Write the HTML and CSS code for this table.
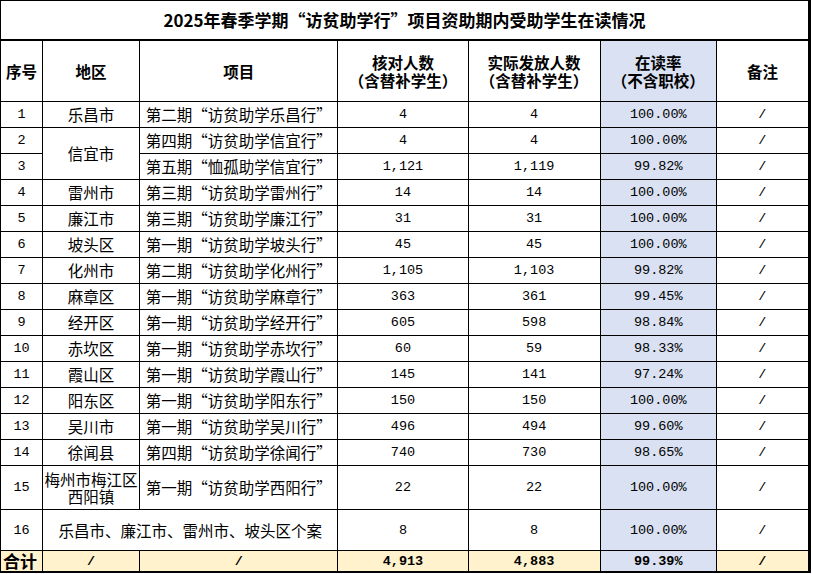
FILE: index.html
```html
<!DOCTYPE html>
<html lang="zh-CN">
<head>
<meta charset="utf-8">
<title>2025年春季学期“访贫助学行”项目资助期内受助学生在读情况</title>
<link rel="stylesheet" href="styles.css">
</head>
<body>
<table class="sheet">
  <colgroup>
    <col class="c-no"><col class="c-area"><col class="c-proj"><col class="c-num"><col class="c-num2"><col class="c-rate"><col class="c-note">
  </colgroup>
  <tr class="r-title"><td colspan="7" class="title">2025年春季学期“访贫助学行”项目资助期内受助学生在读情况</td></tr>
  <tr class="r-head">
    <th>序号</th><th>地区</th><th>项目</th>
    <th>核对人数<br>（含替补学生）</th>
    <th>实际发放人数<br>（含替补学生）</th>
    <th class="rate">在读率<br>（不含职校）</th>
    <th>备注</th>
  </tr>
  <tr class="r"><td class="n">1</td><td>乐昌市</td><td>第二期“访贫助学乐昌行”</td><td class="n">4</td><td class="n">4</td><td class="n rate">100.00%</td><td class="n">/</td></tr>
  <tr class="r"><td class="n">2</td><td rowspan="2">信宜市</td><td>第四期“访贫助学信宜行”</td><td class="n">4</td><td class="n">4</td><td class="n rate">100.00%</td><td class="n">/</td></tr>
  <tr class="r"><td class="n">3</td><td>第五期“恤孤助学信宜行”</td><td class="n">1,121</td><td class="n">1,119</td><td class="n rate">99.82%</td><td class="n">/</td></tr>
  <tr class="r"><td class="n">4</td><td>雷州市</td><td>第三期“访贫助学雷州行”</td><td class="n">14</td><td class="n">14</td><td class="n rate">100.00%</td><td class="n">/</td></tr>
  <tr class="r"><td class="n">5</td><td>廉江市</td><td>第三期“访贫助学廉江行”</td><td class="n">31</td><td class="n">31</td><td class="n rate">100.00%</td><td class="n">/</td></tr>
  <tr class="r"><td class="n">6</td><td>坡头区</td><td>第一期“访贫助学坡头行”</td><td class="n">45</td><td class="n">45</td><td class="n rate">100.00%</td><td class="n">/</td></tr>
  <tr class="r"><td class="n">7</td><td>化州市</td><td>第二期“访贫助学化州行”</td><td class="n">1,105</td><td class="n">1,103</td><td class="n rate">99.82%</td><td class="n">/</td></tr>
  <tr class="r"><td class="n">8</td><td>麻章区</td><td>第一期“访贫助学麻章行”</td><td class="n">363</td><td class="n">361</td><td class="n rate">99.45%</td><td class="n">/</td></tr>
  <tr class="r"><td class="n">9</td><td>经开区</td><td>第一期“访贫助学经开行”</td><td class="n">605</td><td class="n">598</td><td class="n rate">98.84%</td><td class="n">/</td></tr>
  <tr class="r"><td class="n">10</td><td>赤坎区</td><td>第一期“访贫助学赤坎行”</td><td class="n">60</td><td class="n">59</td><td class="n rate">98.33%</td><td class="n">/</td></tr>
  <tr class="r"><td class="n">11</td><td>霞山区</td><td>第一期“访贫助学霞山行”</td><td class="n">145</td><td class="n">141</td><td class="n rate">97.24%</td><td class="n">/</td></tr>
  <tr class="r"><td class="n">12</td><td>阳东区</td><td>第一期“访贫助学阳东行”</td><td class="n">150</td><td class="n">150</td><td class="n rate">100.00%</td><td class="n">/</td></tr>
  <tr class="r"><td class="n">13</td><td>吴川市</td><td>第一期“访贫助学吴川行”</td><td class="n">496</td><td class="n">494</td><td class="n rate">99.60%</td><td class="n">/</td></tr>
  <tr class="r"><td class="n">14</td><td>徐闻县</td><td>第四期“访贫助学徐闻行”</td><td class="n">740</td><td class="n">730</td><td class="n rate">98.65%</td><td class="n">/</td></tr>
  <tr class="r15"><td class="n">15</td><td class="tight">梅州市梅江区<br>西阳镇</td><td>第一期“访贫助学西阳行”</td><td class="n">22</td><td class="n">22</td><td class="n rate">100.00%</td><td class="n">/</td></tr>
  <tr class="r16"><td class="n">16</td><td colspan="2">乐昌市、廉江市、雷州市、坡头区个案</td><td class="n">8</td><td class="n">8</td><td class="n rate">100.00%</td><td class="n">/</td></tr>
  <tr class="r-total">
    <td class="total-label">合计</td><td class="n">/</td><td class="n">/</td><td class="n">4,913</td><td class="n">4,883</td><td class="n rate">99.39%</td><td class="n">/</td>
  </tr>
</table>
</body>
</html>
```

FILE: styles.css
```css
html, body {
  margin: 0;
  padding: 0;
  background: #ffffff;
}

.sheet {
  border-collapse: collapse;
  table-layout: fixed;
  width: 811px;
  border-top: 1px solid #000;
  border-left: 1px solid #000;
  border-right: 3px solid #000;
  border-bottom: 2px solid #000;
  font-family: "Noto Sans CJK SC", sans-serif;
  font-size: 15.5px;
  color: #000;
}

.c-no { width: 42px; }
.c-area { width: 97px; }
.c-proj { width: 198px; }
.c-num { width: 130px; }
.c-num2 { width: 132px; }
.c-rate { width: 116px; }
.c-note { width: 93px; }

.sheet td, .sheet th {
  border: 1px solid #000;
  padding: 0;
  text-align: center;
  vertical-align: middle;
  white-space: nowrap;
  overflow: hidden;
  line-height: 17px;
}

.r-title td {
  height: 38px;
  border-bottom: 2px solid #000;
  font-size: 17px;
  font-weight: 700;
  line-height: 20px;
}

.r-head th {
  height: 60px;
  font-size: 15.5px;
  font-weight: 700;
  line-height: 18px;
}

.r td { height: 25px; }
.r15 td { height: 43px; }
.r16 td { height: 40px; }

.sheet td.tight { line-height: 17px; }

.n {
  font-family: "Liberation Mono", "DejaVu Sans Mono", monospace;
  font-size: 13.5px;
}

.rate { background: #d9e1f2; }

.r-total td {
  height: 20px;
  line-height: 17px;
  background: #fff2cc;
  font-weight: 700;
}
.r-total td.rate { background: #d9e1f2; }

.r-total td.total-label {
  font-size: 17px;
  line-height: 18px;
  text-align: left;
  padding-left: 2px;
  overflow: visible;
}
```
